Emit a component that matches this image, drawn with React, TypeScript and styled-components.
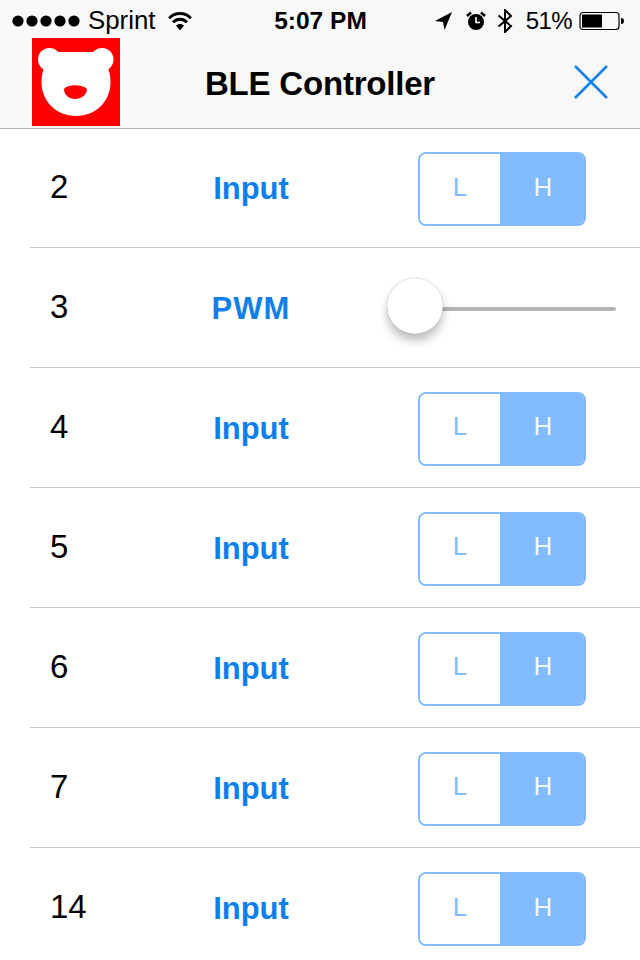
import React from "react";
import styled, { createGlobalStyle } from "styled-components";

const Global = createGlobalStyle`
  html, body { margin: 0; padding: 0; background: #fff; }
  body { font-family: "Liberation Sans", Arial, sans-serif; color: #000; width: 640px; height: 960px; overflow: hidden; }
`;

const Page = styled.div`
  width: 640px;
  height: 960px;
  overflow: hidden;
  display: flex;
  flex-direction: column;
`;

const Header = styled.header`
  height: 129px;
  box-sizing: border-box;
  flex: none;
  background: #f8f8f8;
  border-bottom: 1px solid #b2b2b2;
`;

const StatusBar = styled.div`
  height: 38px;
  padding: 3px 15px 0 12px;
  box-sizing: border-box;
  display: grid;
  grid-template-columns: 1fr auto 1fr;
  align-items: center;
  font-size: 25.8px;
  line-height: 35px;
`;

const StatusLeft = styled.div`
  display: flex;
  align-items: center;
`;

const StatusRight = styled.div`
  display: flex;
  align-items: center;
  justify-content: flex-end;
`;

const Carrier = styled.span`
  margin-left: 6px;
`;

const Clock = styled.span`
  font-weight: 700;
  font-size: 24.5px;
  padding-left: 4px;
`;

const Percent = styled.span`
  margin-left: 13px;
  font-size: 24px;
  letter-spacing: -0.6px;
`;

const NavBar = styled.div`
  height: 90px;
  padding: 0 32px;
  display: grid;
  grid-template-columns: 88px 1fr 88px;
  align-items: start;
`;

const Title = styled.h1`
  margin: 0;
  padding-top: 26px;
  text-align: center;
  font-size: 33px;
  line-height: 40px;
  font-weight: 700;
  letter-spacing: -0.2px;
`;

const CloseButton = styled.div`
  justify-self: end;
  display: flex;
  margin: 26px -1px 0 0;
`;

const Row = styled.div`
  height: 120px;
  flex: none;
  box-sizing: border-box;
  margin-left: 30px;
  padding: 2px 0 0 20px;
  border-bottom: 1px solid #c8c8c8;
  display: grid;
  grid-template-columns: 130px 142px 1fr;
  align-items: center;
  &:first-of-type { height: 119px; }
  &:last-child { border-bottom: none; }
`;

const Pin = styled.span`
  font-size: 33px;
  line-height: 40px;
  margin-top: -4px;
`;

const Mode = styled.span<{ $caps?: boolean }>`
  color: #0f7fec;
  font-size: 31px;
  line-height: 40px;
  font-weight: 700;
  text-align: center;
  letter-spacing: ${(p) => (p.$caps ? "1px" : "0")};
`;

const Segmented = styled.div`
  margin-left: 96px;
  width: 168px;
  height: 74px;
  box-sizing: border-box;
  border: 2px solid #82bbff;
  border-radius: 8px;
  overflow: hidden;
  display: grid;
  grid-template-columns: 80px 1fr;
`;

const Segment = styled.div<{ $on?: boolean }>`
  display: flex;
  align-items: center;
  justify-content: center;
  padding-bottom: 4px;
  padding-left: ${(p) => (p.$on ? "2px" : "0")};
  font-size: 26px;
  background: ${(p) => (p.$on ? "#82bbff" : "#fff")};
  color: ${(p) => (p.$on ? "#f2f8ff" : "#82bbff")};
`;

const Slider = styled.div`
  margin-left: 65px;
  width: 229px;
  height: 56px;
  position: relative;
  display: flex;
  align-items: center;
`;

const Track = styled.div`
  width: 100%;
  height: 4px;
  border-radius: 2px;
  background: #b5b5b5;
`;

const Thumb = styled.div`
  position: absolute;
  left: 0;
  top: -3px;
  width: 56px;
  height: 56px;
  border-radius: 50%;
  background: #fff;
  box-shadow: 0 0 1px rgba(0, 0, 0, 0.45), 0 7px 10px rgba(0, 0, 0, 0.25);
`;

const Bear = () => (
  <svg width="88" height="88" viewBox="0 0 88 88" aria-label="logo">
    <rect width="88" height="88" fill="#fe0000" />
    <circle cx="17.5" cy="21.5" r="11.5" fill="#fff" />
    <circle cx="70" cy="21.5" r="11.5" fill="#fff" />
    <path d="M24 14 H64 C73 20 78.500 32 78.500 44 C78.500 64 63 78 44 78 C25 78 9.500 64 9.500 44 C9.500 32 15 20 24 14 Z" fill="#fff" />
    <path d="M32 51 C36 46 50 46 55 51 C55 57 49 61 43 61 C37 61 32 57 32 51 Z" fill="#fe0000" />
  </svg>
);

const Dots = () => (
  <svg width="70" height="14" viewBox="0 0 70 14">
    {[7, 21, 35, 49, 63].map((x) => (
      <circle key={x} cx={x - 1} cy="7" r="5.6" fill="#000" />
    ))}
  </svg>
);

const Wifi = () => (
  <svg width="24" height="20" viewBox="0 0 24 20" style={{ marginLeft: 13 }}>
    <path d="M1.2 7.2 C7 1 17 1 22.8 7.2" fill="none" stroke="#000" strokeWidth="3" />
    <path d="M5 11.2 C9 7.2 15 7.2 19 11.2" fill="none" stroke="#000" strokeWidth="3" />
    <path d="M8 14.6 L12 19.5 L16 14.6 C14 12.4 10 12.4 8 14.6 Z" fill="#000" />
  </svg>
);

const Arrow = () => (
  <svg width="17" height="18" viewBox="0 0 17 18">
    <path d="M0 9 L17 0 L9.5 18 L8 10 Z" fill="#000" />
  </svg>
);

const Alarm = () => (
  <svg width="20" height="20" viewBox="0 0 20 20" style={{ marginLeft: 14 }}>
    <circle cx="10" cy="11" r="8" fill="#000" />
    <path d="M1 5 L5 1.5 M19 5 L15 1.5" stroke="#000" strokeWidth="2.6" />
    <path d="M10 6 V11.5 H14" stroke="#fff" strokeWidth="1.6" fill="none" />
  </svg>
);

const Bluetooth = () => (
  <svg width="16" height="24" viewBox="0 0 16 24" style={{ marginLeft: 11 }}>
    <path d="M1.5 6.5 L14 17 L8 23 V1 L14 7 L1.5 17.5" fill="none" stroke="#000" strokeWidth="2" />
  </svg>
);

const Battery = () => (
  <svg width="46" height="20" viewBox="0 0 46 20" style={{ marginLeft: 7 }}>
    <rect x="1" y="1.5" width="39" height="17" rx="3" fill="none" stroke="#000" strokeWidth="1.2" />
    <rect x="3" y="3.5" width="20" height="13" fill="#000" />
    <path d="M42 7 C44.5 7 45 8.5 45 10 C45 11.5 44.5 13 42 13 Z" fill="#000" />
  </svg>
);

const Cross = () => (
  <svg width="36" height="36" viewBox="0 0 36 36">
    <path d="M2 2 L34 34 M34 2 L2 34" stroke="#1580ee" strokeWidth="2.6" fill="none" />
  </svg>
);

const pins: { pin: number; mode: string }[] = [
  { pin: 2, mode: "Input" },
  { pin: 3, mode: "PWM" },
  { pin: 4, mode: "Input" },
  { pin: 5, mode: "Input" },
  { pin: 6, mode: "Input" },
  { pin: 7, mode: "Input" },
  { pin: 14, mode: "Input" },
];

export default function App() {
  return (
    <Page>
      <Global />
      <Header>
        <StatusBar>
          <StatusLeft>
            <Dots />
            <Carrier>Sprint</Carrier>
            <Wifi />
          </StatusLeft>
          <Clock>5:07 PM</Clock>
          <StatusRight>
            <Arrow />
            <Alarm />
            <Bluetooth />
            <Percent>51%</Percent>
            <Battery />
          </StatusRight>
        </StatusBar>
        <NavBar>
          <Bear />
          <Title>BLE Controller</Title>
          <CloseButton>
            <Cross />
          </CloseButton>
        </NavBar>
      </Header>
      {pins.map(({ pin, mode }) => (
        <Row key={pin}>
          <Pin>{pin}</Pin>
          <Mode $caps={mode === "PWM"}>{mode}</Mode>
          {mode === "PWM" ? (
            <Slider>
              <Track />
              <Thumb />
            </Slider>
          ) : (
            <Segmented>
              <Segment>L</Segment>
              <Segment $on>H</Segment>
            </Segmented>
          )}
        </Row>
      ))}
    </Page>
  );
}
